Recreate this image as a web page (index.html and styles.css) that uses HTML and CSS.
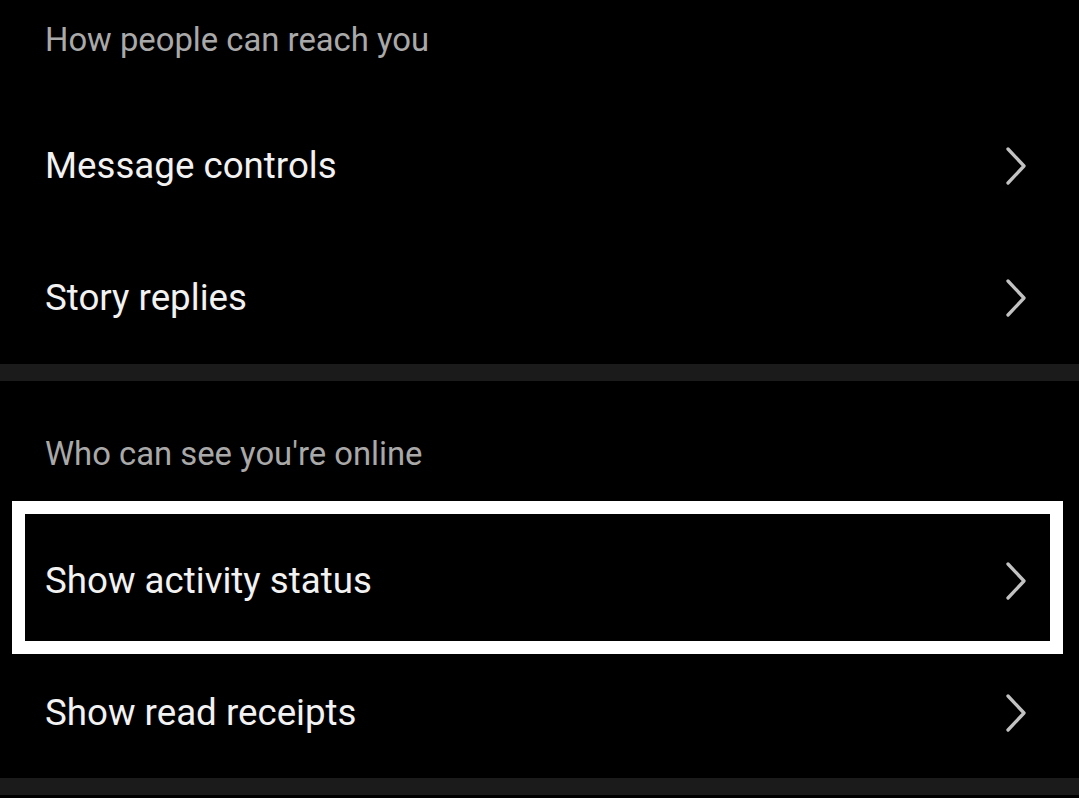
FILE: index.html
```html
<!DOCTYPE html>
<html>
<head>
<meta charset="utf-8">
<link rel="stylesheet" href="styles.css">
</head>
<body>
<div class="screen">
  <section class="group">
    <div class="group-title first">How people can reach you</div>
    <div class="row"><span class="label">Message controls</span><svg class="chev" viewBox="0 0 22 40"><path d="M3 3 L19 20 L3 37"/></svg></div>
    <div class="row"><span class="label">Story replies</span><svg class="chev" viewBox="0 0 22 40"><path d="M3 3 L19 20 L3 37"/></svg></div>
  </section>
  <div class="divider"></div>
  <section class="group">
    <div class="group-title">Who can see you're online</div>
    <div class="row highlighted"><span class="label">Show activity status</span><svg class="chev" viewBox="0 0 22 40"><path d="M3 3 L19 20 L3 37"/></svg></div>
    <div class="row"><span class="label">Show read receipts</span><svg class="chev" viewBox="0 0 22 40"><path d="M3 3 L19 20 L3 37"/></svg></div>
  </section>
  <div class="divider bottom"></div>
</div>
</body>
</html>
```

FILE: styles.css
```css
html, body {
  margin: 0;
  padding: 0;
  background: #000;
}
.screen {
  width: 1079px;
  height: 798px;
  overflow: hidden;
  background: #000;
  font-family: Roboto, "Noto Sans", sans-serif;
}
.group {
  display: flex;
  flex-direction: column;
}
.group-title {
  height: 134px;
  box-sizing: border-box;
  padding: 55px 0 0 45px;
  color: #a9a9a9;
  font-size: 32.8px;
  line-height: 36px;
}
.group-title.first {
  height: 100px;
  padding-top: 22px;
}
.row {
  position: relative;
  height: 132px;
  display: flex;
  align-items: center;
  justify-content: space-between;
  padding: 0 52px 0 45px;
  color: #f2f2f2;
  font-size: 36.7px;
}
.label {
  line-height: 42px;
}
.chev {
  width: 22px;
  height: 40px;
  fill: none;
  stroke: #c2c2c2;
  stroke-width: 3.3;
  stroke-linecap: round;
  stroke-linejoin: round;
}
.highlighted::after {
  content: "";
  position: absolute;
  left: 12px;
  right: 16px;
  top: -14px;
  bottom: -7px;
  border: 13px solid #fff;
  pointer-events: none;
}
.divider {
  height: 17px;
  background: #1b1b1b;
}
.divider.bottom {
  margin-top: -1px;
}
```
